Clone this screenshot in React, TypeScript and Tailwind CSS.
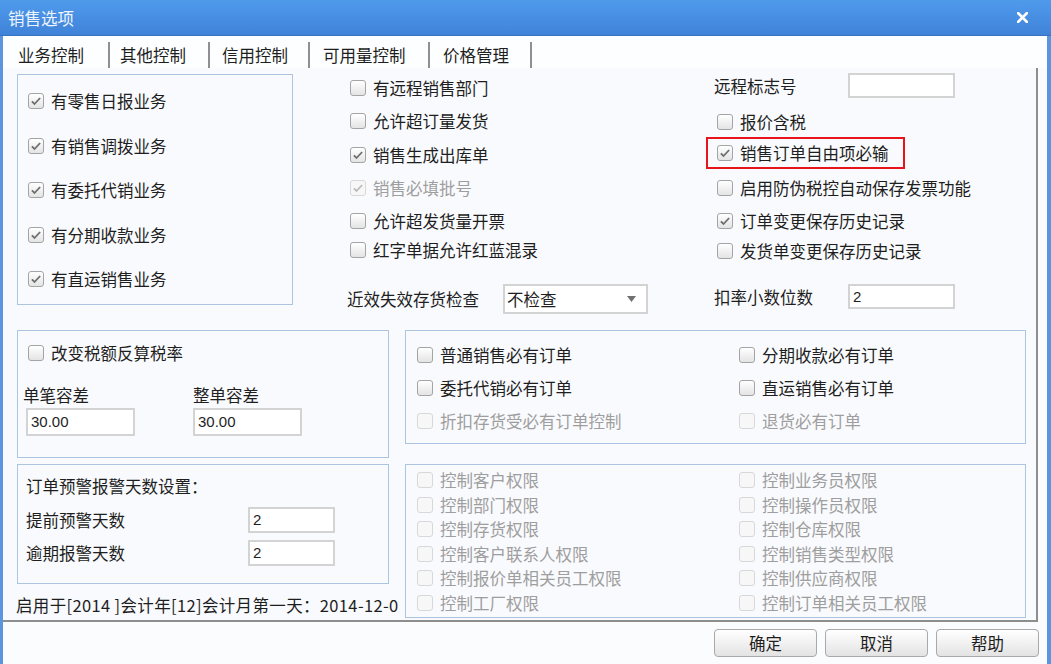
import React from 'react';

const font = "font-['Noto_Sans_CJK_SC','Noto_Sans',sans-serif]";

type CheckProps = { checked?: boolean; disabled?: boolean; label: string; className?: string };

const Check = ({ checked = false, disabled = false, label, className = '' }: CheckProps) => (
  <div className={`flex h-5 items-center ${className}`}>
    <span
      className={`flex h-4 w-4 shrink-0 items-center justify-center rounded-[3px] border ${
        disabled ? 'border-[#d8d8d8] bg-[#f7f7f7]' : 'border-[#a4a4a4] bg-linear-to-b from-white to-[#e4e4e4]'
      }`}
    >
      {checked && (
        <svg viewBox="0 0 16 16" className="h-3 w-3">
          <path d="M2.5 8.5l3.5 3.5 7.5-8" fill="none" stroke={disabled ? '#bbbbbb' : '#6f6f6f'} strokeWidth="2.4" />
        </svg>
      )}
    </span>
    <span className={`ml-[7px] whitespace-nowrap ${disabled ? 'text-[#9e9e9e]' : 'text-[#1e1e1e]'}`}>{label}</span>
  </div>
);

const Input = ({ value = '', className = '' }: { value?: string; className?: string }) => (
  <div
    className={`flex items-center border-2 border-[#d3d3d3] bg-white pl-[3px] font-['Liberation_Sans',sans-serif] text-[15px] text-[#1e1e1e] ${className}`}
  >
    {value}
  </div>
);

const Tab = ({ label, className }: { label: string; className: string }) => (
  <div className={`mt-[9px] h-5 whitespace-nowrap text-[#1e1e1e] ${className}`}>{label}</div>
);

const Sep = () => <div className="mt-[6px] h-[26px] w-[2px] bg-[#8f8f8f]" />;

const Button = ({ label }: { label: string }) => (
  <button className="flex h-[28px] w-[103px] items-center justify-center rounded-[4px] border border-[#a9a9a9] bg-linear-to-b from-white to-[#e3e3e3] text-[#1e1e1e]">
    {label}
  </button>
);

const perms: [string, string][] = [
  ['控制客户权限', '控制业务员权限'],
  ['控制部门权限', '控制操作员权限'],
  ['控制存货权限', '控制仓库权限'],
  ['控制客户联系人权限', '控制销售类型权限'],
  ['控制报价单相关员工权限', '控制供应商权限'],
  ['控制工厂权限', '控制订单相关员工权限'],
];

export default function App() {
  return (
    <div className={`flex h-[664px] w-[1051px] flex-col overflow-hidden bg-[#fbfcfe] text-[16.5px] leading-5 ${font}`}>
      {/* title bar */}
      <div className="flex h-9 shrink-0 items-center justify-between border-b border-[#3872c2] bg-linear-to-b from-[#509aec] to-[#3f83d8] pl-2 pr-[23px]">
        <span className="text-[#eef4fc]">销售选项</span>
        <svg viewBox="0 0 11 11" className="h-[11px] w-[11px]">
          <path d="M1 1l9 9M10 1l-9 9" stroke="#ffffff" strokeWidth="2.6" strokeLinecap="round" />
        </svg>
      </div>

      <div className="flex flex-1 flex-col border-l-[3px] border-r-4 border-[#5a95df]">
        {/* tabs */}
        <div className="flex h-8 shrink-0 items-start bg-[#fdfeff] pl-[15px]">
          <Tab label="业务控制" className="w-[90px]" />
          <Sep />
          <Tab label="其他控制" className="w-[98px] pl-[10px]" />
          <Sep />
          <Tab label="信用控制" className="w-[98px] pl-[12px]" />
          <Sep />
          <Tab label="可用量控制" className="w-[118px] pl-[13px]" />
          <Sep />
          <Tab label="价格管理" className="w-[100px] pl-[13px]" />
          <Sep />
        </div>

        {/* panel */}
        <div className="flex h-[554px] w-[1035px] shrink-0 flex-col border-b-2 border-r-2 border-[#8e8e8e] bg-[#f9fafd]">
          <div className="flex h-[262px] shrink-0">
            {/* box 1 */}
            <div className="ml-[14px] mt-[6px] flex h-[231px] w-[276px] flex-col gap-[24.5px] border border-[#adc4e1] pl-[10px] pt-4">
              <Check checked label="有零售日报业务" />
              <Check checked label="有销售调拨业务" />
              <Check checked label="有委托代销业务" />
              <Check checked label="有分期收款业务" />
              <Check checked label="有直运销售业务" />
            </div>

            {/* middle column */}
            <div className="ml-[54px] flex w-[367px] flex-col">
              <Check label="有远程销售部门" className="ml-[3px] mt-[10px]" />
              <Check label="允许超订量发货" className="ml-[3px] mt-[13px]" />
              <Check checked label="销售生成出库单" className="ml-[3px] mt-[14px]" />
              <Check checked disabled label="销售必填批号" className="ml-[3px] mt-[13px]" />
              <Check label="允许超发货量开票" className="ml-[3px] mt-[13px]" />
              <Check label="红字单据允许红蓝混录" className="ml-[3px] mt-[9px]" />
              <div className="mt-[24px] flex h-[30px] items-center">
                <span className="w-[156px] text-[#1e1e1e]">近效失效存货检查</span>
                <div className="flex h-[30px] w-[145px] items-center justify-between border-2 border-[#d3d3d3] bg-white pl-[2px] pr-[10px] text-[#1e1e1e]">
                  <span>不检查</span>
                  <svg viewBox="0 0 9 6" className="h-[6px] w-[9px]">
                    <path d="M0 0h9L4.5 6z" fill="#707070" />
                  </svg>
                </div>
              </div>
            </div>

            {/* right column */}
            <div className="flex flex-1 flex-col">
              <div className="mt-[5px] flex h-[25px] items-center">
                <span className="w-[134px] text-[#1e1e1e]">远程标志号</span>
                <Input className="h-[25px] w-[107px]" />
              </div>
              <Check label="报价含税" className="ml-[3px] mt-[14px]" />
              <div className="-ml-[8px] mt-[5px] flex h-[32px] w-[199px] items-center border-2 border-[#e8141c] pl-[9px]">
                <Check checked label="销售订单自由项必输" />
              </div>
              <Check label="启用防伪税控自动保存发票功能" className="ml-[3px] mt-[9px]" />
              <Check checked label="订单变更保存历史记录" className="ml-[3px] mt-[13px]" />
              <Check label="发货单变更保存历史记录" className="ml-[3px] mt-[10px]" />
              <div className="mt-[23px] flex h-[25px] items-center">
                <span className="w-[134px] text-[#1e1e1e]">扣率小数位数</span>
                <Input value="2" className="h-[25px] w-[107px]" />
              </div>
            </div>
          </div>

          <div className="flex flex-1">
            {/* left bottom */}
            <div className="ml-[14px] flex w-[386px] flex-col">
              <div className="flex h-[128px] w-[372px] flex-col border border-[#adc4e1]">
                <Check label="改变税额反算税率" className="ml-[10px] mt-[12px]" />
                <div className="mt-[22px] flex">
                  <div className="flex w-[175px] flex-col pl-[5px]">
                    <span className="h-5 text-[#1e1e1e]">单笔容差</span>
                    <Input value="30.00" className="ml-[3px] mt-[3px] h-[28px] w-[109px]" />
                  </div>
                  <div className="flex flex-col">
                    <span className="h-5 text-[#1e1e1e]">整单容差</span>
                    <Input value="30.00" className="mt-[3px] h-[28px] w-[109px]" />
                  </div>
                </div>
              </div>

              <div className="mt-[6px] flex h-[120px] w-[372px] flex-col border border-[#adc4e1] pl-[8px]">
                <span className="mt-[11px] h-5 text-[#1e1e1e]">订单预警报警天数设置：</span>
                <div className="mt-[11px] flex h-[26px] items-center">
                  <span className="w-[222px] text-[#1e1e1e]">提前预警天数</span>
                  <Input value="2" className="h-[26px] w-[87px]" />
                </div>
                <div className="mt-[7px] flex h-[26px] items-center">
                  <span className="w-[222px] text-[#1e1e1e]">逾期报警天数</span>
                  <Input value="2" className="h-[26px] w-[87px]" />
                </div>
              </div>

              <div className="-ml-px mt-[11px] h-5 whitespace-nowrap tracking-[0.35px] text-[#1e1e1e]">
                启用于[2014 ]会计年[12]会计月第一天：2014-12-0
              </div>
            </div>

            {/* right bottom */}
            <div className="ml-[2px] flex w-[621px] flex-col">
              <div className="grid h-[114px] grid-cols-[322px_1fr] content-start gap-y-[13px] border border-[#adc4e1] pl-[11px] pt-[14px]">
                <Check label="普通销售必有订单" />
                <Check label="分期收款必有订单" />
                <Check label="委托代销必有订单" />
                <Check label="直运销售必有订单" />
                <Check disabled label="折扣存货受必有订单控制" />
                <Check disabled label="退货必有订单" />
              </div>

              <div className="mt-[20px] grid h-[154px] auto-rows-[24.5px] grid-cols-[322px_1fr] content-start border border-[#adc4e1] pl-[11px] pt-[3px]">
                {perms.map(([a, b]) => (
                  <React.Fragment key={a}>
                    <Check disabled label={a} className="h-[24.5px]" />
                    <Check disabled label={b} className="h-[24.5px]" />
                  </React.Fragment>
                ))}
              </div>
            </div>
          </div>
        </div>

        {/* footer */}
        <div className="flex flex-1 justify-end gap-2 pr-2 pt-[7px]">
          <Button label="确定" />
          <Button label="取消" />
          <Button label="帮助" />
        </div>
      </div>
    </div>
  );
}
